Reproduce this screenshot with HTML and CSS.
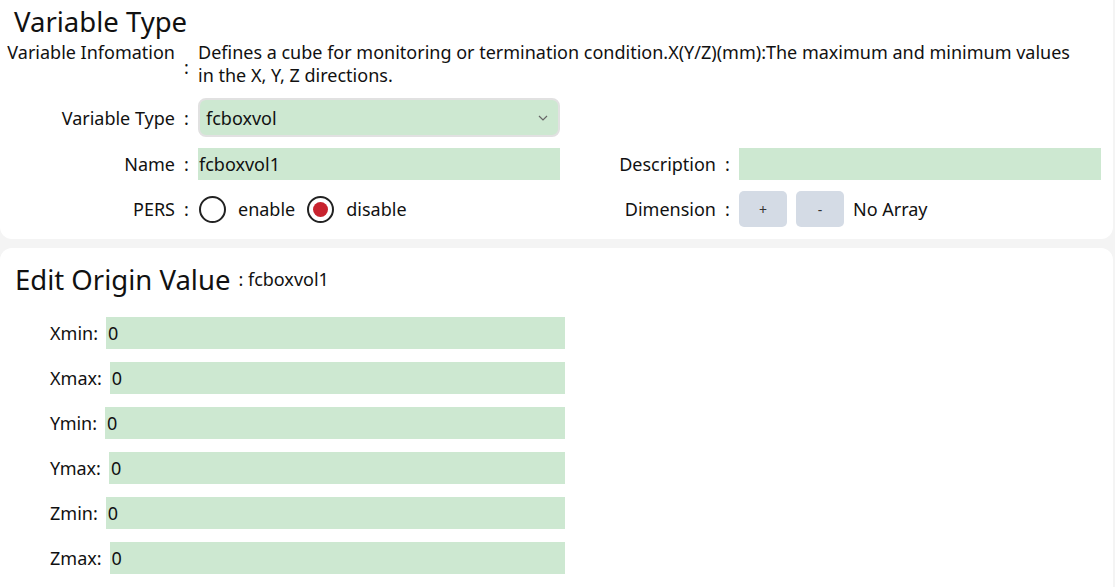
FILE: index.html
```html
<!DOCTYPE html>
<html lang="en">
<head>
  <meta charset="UTF-8" />
  <title>Variable Type</title>
  <link rel="stylesheet" href="styles.css">
</head>
<body>
  <section class="card card-top">
    <h1 class="card-title">Variable Type</h1>

    <div class="info-row">
      <span class="info-label">Variable Infomation</span>
      <span class="colon info-colon">:</span>
      <p class="info-text">Defines a cube for monitoring or termination condition.X(Y/Z)(mm):The maximum and minimum values in the X, Y, Z directions.</p>
    </div>

    <div class="form-grid">
      <div class="field">
        <label class="field-label">Variable Type</label>
        <span class="colon">:</span>
        <div class="select-box">
          <span>fcboxvol</span>
          <svg class="chevron" width="10" height="6" viewBox="0 0 10 6"><path d="M1 1l4 4 4-4" fill="none" stroke="#666" stroke-width="1.2"/></svg>
        </div>
      </div>
      <div class="field"></div>

      <div class="field">
        <label class="field-label">Name</label>
        <span class="colon">:</span>
        <input class="text-input" type="text" value="fcboxvol1" />
      </div>
      <div class="field">
        <label class="field-label">Description</label>
        <span class="colon">:</span>
        <input class="text-input" type="text" value="" />
      </div>

      <div class="field">
        <label class="field-label">PERS</label>
        <span class="colon">:</span>
        <div class="radios">
          <span class="radio"></span><span class="radio-text">enable</span>
          <span class="radio checked"></span><span class="radio-text">disable</span>
        </div>
      </div>
      <div class="field">
        <label class="field-label">Dimension</label>
        <span class="colon">:</span>
        <div class="dims">
          <button class="dim-btn">+</button>
          <button class="dim-btn">-</button>
          <span class="dim-text">No Array</span>
        </div>
      </div>
    </div>
  </section>

  <section class="card card-bottom">
    <div class="origin-head">
      <h2 class="card-title">Edit Origin Value</h2>
      <span class="origin-name">: fcboxvol1</span>
    </div>
    <div class="values">
      <div class="value-row"><label>Xmin:</label><input class="value-input" type="text" value="0" /></div>
      <div class="value-row"><label>Xmax:</label><input class="value-input" type="text" value="0" /></div>
      <div class="value-row"><label>Ymin:</label><input class="value-input" type="text" value="0" /></div>
      <div class="value-row"><label>Ymax:</label><input class="value-input" type="text" value="0" /></div>
      <div class="value-row"><label>Zmin:</label><input class="value-input" type="text" value="0" /></div>
      <div class="value-row"><label>Zmax:</label><input class="value-input" type="text" value="0" /></div>
    </div>
  </section>
</body>
</html>
```

FILE: styles.css
```css
:root {
  --font-ui: 'Noto Sans', 'Open Sans', sans-serif;
  --color-text: #111;
  --color-page: #f4f4f4;
  --color-green: #cde8d1;
  --color-btn: #d4dbe5;
  --color-red: #c8232f;
  --radius-card: 12px;
}

* {
  box-sizing: border-box;
}

body {
  margin: 0;
  font-family: var(--font-ui);
  font-size: 18px;
  color: var(--color-text);
  background: var(--color-page);
  width: 1115px;
  height: 587px;
  overflow: hidden;
}

.card {
  background: #fff;
  width: 1113px;
}

.card-top {
  border-radius: 0 0 var(--radius-card) var(--radius-card);
  padding: 4px 0 12px;
}

.card-bottom {
  margin-top: 9px;
  border-radius: var(--radius-card) var(--radius-card) 0 0;
  padding: 14px 0 20px;
  height: 340px;
}

.card-title {
  margin: 0 0 0 14px;
  font-size: 27.5px;
  font-weight: 400;
  line-height: 36px;
}

.info-row {
  display: flex;
  align-items: stretch;
  margin-top: 1px;
}

.info-label {
  width: 175px;
  text-align: right;
  line-height: 23px;
}

.colon {
  width: 23px;
  text-align: center;
  flex-shrink: 0;
}

.info-colon {
  display: flex;
  align-items: center;
  justify-content: center;
  padding-top: 6px;
}

.info-text {
  margin: 0;
  width: 880px;
  line-height: 23px;
}

.form-grid {
  display: grid;
  grid-template-columns: 560px 541px;
  row-gap: 11px;
  margin-top: 11px;
}

.field {
  display: flex;
  align-items: center;
}

.field-label {
  width: 175px;
  text-align: right;
}

.field:nth-child(even) .field-label {
  width: 156px;
}

.select-box {
  width: 362px;
  height: 39px;
  background: var(--color-green);
  border: 2px solid #e1e1e1;
  border-radius: 8px;
  display: flex;
  align-items: center;
  justify-content: space-between;
  padding: 0 10px 0 6px;
}

.text-input {
  width: 362px;
  height: 32px;
  border: none;
  background: var(--color-green);
  font-family: var(--font-ui);
  font-size: 18px;
  color: var(--color-text);
  padding: 0 1px;
  outline: none;
}

.radios {
  display: flex;
  align-items: center;
  height: 36px;
}

.radio {
  width: 27px;
  height: 27px;
  border: 2px solid #222;
  border-radius: 50%;
  margin-left: 1px;
  display: flex;
  align-items: center;
  justify-content: center;
}

.radio.checked::after {
  content: "";
  width: 15px;
  height: 15px;
  border-radius: 50%;
  background: var(--color-red);
}

.radio-text {
  margin: 0 11px 0 12px;
}

.dims {
  display: flex;
  align-items: center;
  gap: 9px;
}

.dim-btn {
  width: 48px;
  height: 36px;
  border: none;
  border-radius: 5px;
  background: var(--color-btn);
  font-family: var(--font-ui);
  font-size: 14px;
  color: #333;
}

.origin-head {
  display: flex;
  align-items: center;
}

.card-bottom .card-title {
  margin-left: 15px;
}

.origin-name {
  margin-left: 8px;
  margin-top: -2px;
}

.values {
  margin-top: 19px;
  display: flex;
  flex-direction: column;
  gap: 13px;
}

.value-row {
  display: flex;
  align-items: center;
  width: 565px;
  padding-left: 50px;
}

.value-row label {
  margin-right: 8px;
}

.value-input {
  flex: 1;
  height: 32px;
  border: none;
  background: var(--color-green);
  font-family: var(--font-ui);
  font-size: 18px;
  color: var(--color-text);
  padding: 0 2px;
  outline: none;
}
```
